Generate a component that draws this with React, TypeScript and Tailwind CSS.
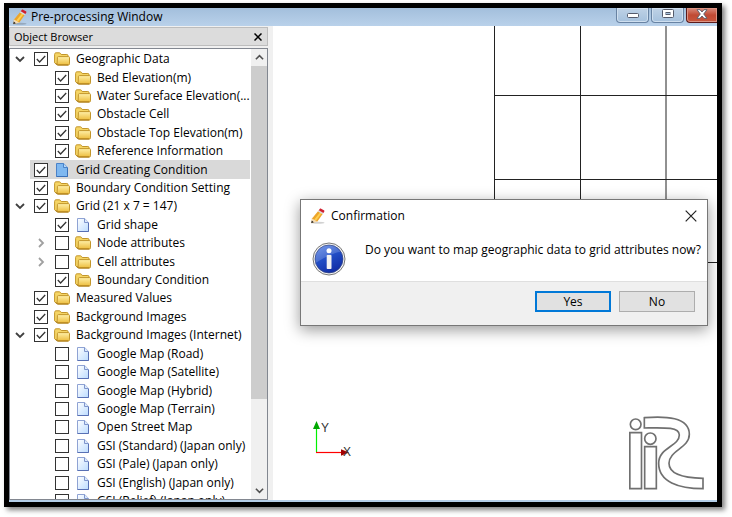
import { useState } from "react";

type Kind = "folder" | "page";

type Item = {
  label: string;
  level: 0 | 1;
  kind: Kind;
  checked: boolean;
  arrow?: "open" | "closed";
  selected?: boolean;
};

const items: Item[] = [
  { label: "Geographic Data", level: 0, kind: "folder", checked: true, arrow: "open" },
  { label: "Bed Elevation(m)", level: 1, kind: "folder", checked: true },
  { label: "Water Sureface Elevation(...", level: 1, kind: "folder", checked: true },
  { label: "Obstacle Cell", level: 1, kind: "folder", checked: true },
  { label: "Obstacle Top Elevation(m)", level: 1, kind: "folder", checked: true },
  { label: "Reference Information", level: 1, kind: "folder", checked: true },
  { label: "Grid Creating Condition", level: 0, kind: "page", checked: true, selected: true },
  { label: "Boundary Condition Setting", level: 0, kind: "folder", checked: true },
  { label: "Grid (21 x 7 = 147)", level: 0, kind: "folder", checked: true, arrow: "open" },
  { label: "Grid shape", level: 1, kind: "page", checked: true },
  { label: "Node attributes", level: 1, kind: "folder", checked: false, arrow: "closed" },
  { label: "Cell attributes", level: 1, kind: "folder", checked: false, arrow: "closed" },
  { label: "Boundary Condition", level: 1, kind: "folder", checked: true },
  { label: "Measured Values", level: 0, kind: "folder", checked: true },
  { label: "Background Images", level: 0, kind: "folder", checked: true },
  { label: "Background Images (Internet)", level: 0, kind: "folder", checked: true, arrow: "open" },
  { label: "Google Map (Road)", level: 1, kind: "page", checked: false },
  { label: "Google Map (Satellite)", level: 1, kind: "page", checked: false },
  { label: "Google Map (Hybrid)", level: 1, kind: "page", checked: false },
  { label: "Google Map (Terrain)", level: 1, kind: "page", checked: false },
  { label: "Open Street Map", level: 1, kind: "page", checked: false },
  { label: "GSI (Standard) (Japan only)", level: 1, kind: "page", checked: false },
  { label: "GSI (Pale) (Japan only)", level: 1, kind: "page", checked: false },
  { label: "GSI (English) (Japan only)", level: 1, kind: "page", checked: false },
  { label: "GSI (Relief) (Japan only)", level: 1, kind: "page", checked: false },
];

function PencilIcon() {
  return (
    <svg viewBox="0 0 16 16" className="size-4 shrink-0" aria-hidden="true">
      <ellipse cx="8" cy="14.8" rx="6.5" ry="1" fill="#000" opacity="0.18" />
      <path d="M2 10.4 8.600 2.600l4.600 2.600-5.800 8.200-5.900 1.600Z" fill="#eda52a" />
      <path d="M4.300 11.500 10.400 3.900l1.400.8-5.600 7.900Z" fill="#ffd050" />
      <path d="m2 10.400 5.400 3-5.900 1.600Z" fill="#f5dcb4" />
      <path d="m1.800 12.600 2 1.600-2.600 1.100Z" fill="#222" />
      <path d="m7.900 3.400.9-1.100 4.600 2.800-.8 1.100Z" fill="#d8dce2" />
      <path d="m8.800 2.300.9-1.300c.4-.5.900-.6 1.400-.3l2.800 1.600c.6.400.7 1 .3 1.500l-.8 1.300Z" fill="#d02030" />
    </svg>
  );
}

function FolderIcon() {
  return (
    <svg viewBox="0 0 16 16" className="size-4 shrink-0" aria-hidden="true">
      <defs>
        <linearGradient id="folderFace" x1="0" y1="0" x2="0" y2="1">
          <stop offset="0" stopColor="#fff0a8" />
          <stop offset="1" stopColor="#ecbc3c" />
        </linearGradient>
      </defs>
      <path d="M.6 11.8V3.4c0-.9.6-1.600 1.500-1.600h3.200c.7 0 1 .3 1.400.9l.5.8h5.600c.8 0 1.300.5 1.300 1.300v1L12.500 13H2Z" fill="#f5d565" stroke="#c2952a" />
      <path d="M3.400 6.600c0-.7.4-1 1-1h10.200c.6 0 .9.4.9 1v6.200c0 .7-.4 1.200-1.100 1.200H4.200c-.7 0-1.100-.4-1.100-1Z" fill="url(#folderFace)" stroke="#c2952a" />
      <path d="M2 12.500c.2.9.7 1.500 1.800 1.500h10.400" fill="none" stroke="#a87712" />
    </svg>
  );
}

function PageIcon({ selected }: { selected?: boolean }) {
  return (
    <svg viewBox="0 0 16 16" className="size-4 shrink-0" aria-hidden="true">
      <defs>
        <linearGradient id="pageFace" x1="0" y1="0" x2="1" y2="1">
          <stop offset="0" stopColor="#ffffff" />
          <stop offset="1" stopColor="#bcdcff" />
        </linearGradient>
      </defs>
      <path d="M2.500 1.500h7.200l3.800 4v9h-11Z" fill={selected ? "#7fb8f0" : "url(#pageFace)"} stroke={selected ? "#4a82c8" : "#8fa3d4"} />
      <path d="M9.500 1.500v4h4" fill={selected ? "#b5d8fa" : "#dbe9fb"} stroke={selected ? "#4a82c8" : "#7f95cc"} />
      <path d="M13.500 6v8.500h-11" fill="none" stroke={selected ? "#3a70b8" : "#5870b4"} />
    </svg>
  );
}

function Chevron({ dir, className }: { dir: "down" | "right" | "up"; className: string }) {
  const d = dir === "down" ? "M1 3l4 4 4-4" : dir === "up" ? "M1 7l4-4 4 4" : "M3 1l4 4-4 4";
  return (
    <svg viewBox="0 0 10 10" className={className} fill="none" stroke="currentColor" strokeWidth="1.8" aria-hidden="true">
      <path d={d} />
    </svg>
  );
}

function TreeRow({ item }: { item: Item }) {
  return (
    <li className={`flex min-h-0 flex-1 items-center ${item.level === 1 ? "pl-[21px]" : ""}`}>
      <span className="flex w-5 shrink-0 justify-center">
        {item.arrow && (
          <button type="button" aria-label={`Toggle ${item.label}`} className="flex size-4 items-center justify-center">
            {item.arrow === "open" ? (
              <Chevron dir="down" className="size-[10px] text-[#404040]" />
            ) : (
              <Chevron dir="right" className="size-[10px] text-[#a0a0a0]" />
            )}
          </button>
        )}
      </span>
      <label className={`mr-px flex h-full flex-1 items-center whitespace-nowrap pl-1 ${item.selected ? "bg-[#d9d9d9]" : ""}`}>
        <span className="mr-[6px] grid size-[14px] shrink-0">
          <input
            type="checkbox"
            defaultChecked={item.checked}
            className="peer col-start-1 row-start-1 size-[14px] appearance-none border border-[#333] bg-white"
          />
          <svg
            viewBox="0 0 14 14"
            className="pointer-events-none invisible col-start-1 row-start-1 size-[14px] peer-checked:visible"
            fill="none"
            stroke="#333"
            strokeWidth="1.3"
            aria-hidden="true"
          >
            <path d="m2.8 7 2.8 3 5.600-6" />
          </svg>
        </span>
        {item.kind === "folder" ? <FolderIcon /> : <PageIcon selected={item.selected} />}
        <span className="ml-[6px]">{item.label}</span>
      </label>
    </li>
  );
}

function ObjectBrowser() {
  return (
    <aside className="flex w-[259px] shrink-0 flex-col">
      <header className="mt-px flex h-[19px] shrink-0 items-center justify-between border border-[#bdbdbd] bg-[#dcdcdc] pr-1 pl-1 text-[11px]">
        <h2>Object Browser</h2>
        <button type="button" aria-label="Close Object Browser" className="flex size-[10px] items-center justify-center">
          <svg viewBox="0 0 8 8" className="size-2" stroke="#000" strokeWidth="1.500" aria-hidden="true">
            <path d="m.5.5 7 7m0-7-7 7" />
          </svg>
        </button>
      </header>
      <div className="mt-[2px] flex min-h-0 flex-1 border border-[#828790] bg-white">
        <div className="min-w-0 flex-1 overflow-hidden pt-px">
          <ul className="flex h-[460px] flex-col">
            {items.map((item) => (
              <TreeRow key={item.label} item={item} />
            ))}
          </ul>
        </div>
        <div className="flex w-4 shrink-0 flex-col bg-[#f0f0f0]">
          <button type="button" aria-label="Scroll up" className="flex h-[17px] items-center justify-center">
            <Chevron dir="up" className="size-[9px] text-[#505050]" />
          </button>
          <div className="flex-1">
            <div className="h-4/5 bg-[#cdcdcd]" />
          </div>
          <button type="button" aria-label="Scroll down" className="flex h-[17px] items-center justify-center">
            <Chevron dir="down" className="size-[9px] text-[#505050]" />
          </button>
        </div>
      </div>
    </aside>
  );
}

function GridLines() {
  return (
    <svg viewBox="0 0 223 238" className="absolute top-0 right-0 h-[238px] w-[223px]" fill="none" stroke="#222" aria-hidden="true">
      <path d="M.5 0v237M86.500 0v237M172 0v237M0 69.500H223M0 153.500H223M0 236.500H223" />
    </svg>
  );
}

function Axes() {
  return (
    <svg viewBox="0 0 40 40" className="absolute bottom-[42px] left-[40px] size-10" aria-label="X and Y axes">
      <path d="M3.500 34V9" stroke="#00f000" strokeWidth="1.200" />
      <path d="M3.500 3 7 11H0Z" fill="#00a800" />
      <path d="M3 34.500H28" stroke="#f00" strokeWidth="1.200" />
      <path d="m36 34.500-8-3.200v6.400Z" fill="#a00000" />
      <text x="8" y="14" fontSize="12" fill="#333" className="font-['Liberation_Sans',sans-serif]">Y</text>
      <text x="30" y="38" fontSize="12" fill="#333" className="font-['Liberation_Sans',sans-serif]">X</text>
    </svg>
  );
}

function Logo() {
  return (
    <svg
      viewBox="87 80 225 222"
      className="absolute right-[13px] bottom-[10px] h-[74px] w-[75px]"
      fill="none"
      stroke="#707070"
      strokeWidth="5"
      aria-label="iRIC"
    >
      <circle cx="107" cy="105" r="16" />
      <path d="M89.500 130h35v168h-35Z" />
      <circle cx="151" cy="148" r="17" />
      <path d="M134 172h35v126h-35Z" />
      <path d="M133 85C195 80 268 82 268 135C268 177 207 183 207 222C207 254 247 266 309 267V298C236 298 176 278 176 222C176 174 238 171 238 137C238 112 190 115 133 116Z" />
    </svg>
  );
}

function InfoIcon() {
  return (
    <svg viewBox="0 0 34 34" className="size-[34px] shrink-0" aria-hidden="true">
      <defs>
        <linearGradient id="infoBall" x1="0" y1="0" x2="0.500" y2="1">
          <stop offset="0" stopColor="#5b86e8" />
          <stop offset="0.500" stopColor="#2350c8" />
          <stop offset="1" stopColor="#1230a8" />
        </linearGradient>
      </defs>
      <circle cx="17" cy="17" r="16" fill="#f4f4f4" stroke="#777" />
      <circle cx="17" cy="17" r="14" fill="url(#infoBall)" stroke="#33447c" strokeWidth="0.700" />
      <path d="M3.500 17C4 9 9 3.500 17 3.500c5 0 9 2.500 11.500 6.500C22 10 12 16 3.500 21Z" fill="#fff" opacity="0.180" />
      <circle cx="17" cy="8.700" r="2.500" fill="#fff" />
      <rect x="14.700" y="13" width="4.800" height="14" rx="0.800" fill="#f2f2f2" />
    </svg>
  );
}

function Confirmation({ onClose }: { onClose: () => void }) {
  return (
    <section
      role="dialog"
      aria-labelledby="confirm-title"
      className="absolute top-[173px] right-[9px] flex w-[408px] flex-col border border-[#777] bg-white shadow-[0_4px_14px_rgba(0,0,0,0.4)]"
    >
      <header className="flex h-[31px] items-center pr-[10px] pl-[9px]">
        <PencilIcon />
        <h2 id="confirm-title" className="ml-[5px] flex-1">Confirmation</h2>
        <button type="button" aria-label="Close" onClick={onClose} className="flex size-3 items-center justify-center">
          <svg viewBox="0 0 12 12" className="size-3" stroke="#222" strokeWidth="1.200" aria-hidden="true">
            <path d="m.7.7 10.600 10.600m0-10.600L.7 11.300" />
          </svg>
        </button>
      </header>
      <div className="flex h-[50px] items-start pt-[11px] pl-[11px]">
        <InfoIcon />
        <p className="ml-[19px] whitespace-nowrap">Do you want to map geographic data to grid attributes now?</p>
      </div>
      <footer className="flex h-[44px] items-start justify-end gap-2 border-t border-[#dfdfdf] bg-[#f0f0f0] pt-[9px] pr-3">
        <button type="button" onClick={onClose} className="flex h-[21px] w-[76px] items-center justify-center border-2 border-[#0078d7] bg-[#e1e1e1]">
          Yes
        </button>
        <button type="button" onClick={onClose} className="flex h-[21px] w-[76px] items-center justify-center border border-[#adadad] bg-[#e1e1e1]">
          No
        </button>
      </footer>
    </section>
  );
}

function TitleBar() {
  return (
    <header className="flex h-[18px] shrink-0 items-center bg-linear-to-b from-[#a3bfdc] to-[#b9d1ea] pl-[3px]">
      <PencilIcon />
      <h1 className="ml-[3px] flex-1">Pre-processing Window</h1>
      <div className="flex gap-[2px] self-start">
        <button type="button" aria-label="Minimize" className="flex h-[15px] w-[33px] items-center justify-center rounded-b-sm border border-t-0 border-[#6883a3] bg-linear-to-b from-[#bfd2e6] to-[#a5c1dd] inset-shadow-[0_0_0_1px_#cfdfef]">
          <svg viewBox="0 0 12 5" className="mt-px h-[5px] w-3" aria-hidden="true">
            <rect x=".5" y=".5" width="11" height="4" rx="1" fill="#fff" stroke="#555b6b" />
          </svg>
        </button>
        <button type="button" aria-label="Maximize" className="flex h-[15px] w-[33px] items-center justify-center rounded-b-sm border border-t-0 border-[#6883a3] bg-linear-to-b from-[#bfd2e6] to-[#a5c1dd] pb-[3px] inset-shadow-[0_0_0_1px_#cfdfef]">
          <svg viewBox="0 0 12 10" className="h-[10px] w-3" aria-hidden="true">
            <rect x=".5" y=".5" width="11" height="8" rx="1" fill="#fff" stroke="#555b6b" />
            <rect x="4" y="3.500" width="4" height="2" fill="#a9c3de" stroke="#555b6b" />
          </svg>
        </button>
        <button type="button" aria-label="Close window" className="flex h-[15px] w-[31px] items-center justify-center rounded-bl-sm border border-t-0 border-r-0 border-[#5c1a1a] bg-linear-to-b from-[#d98b7c] via-[#c04a34] to-[#c8563c] pb-[3px] inset-shadow-[0_0_0_1px_#dc9484]">
          <svg viewBox="0 0 12 10" className="h-[10px] w-3" aria-hidden="true">
            <path d="M1 .7h3L6 3 8 .7h3L7.700 5 11 9.300H8L6 7 4 9.300H1L4.300 5Z" fill="#fff" stroke="#555b6b" strokeWidth="0.900" />
          </svg>
        </button>
      </div>
    </header>
  );
}

export default function App() {
  const [asking, setAsking] = useState(true);
  return (
    <div className="flex h-screen min-h-[400px] bg-white pt-[3px] pr-[10px] pb-[10px] pl-1 font-['Open_Sans',sans-serif] text-[12px] leading-4 text-black">
      <div className="flex min-w-0 flex-1 flex-col border-[5px] border-black bg-[#b5cfe9] pb-[2px] shadow-[3px_3px_5px_rgba(0,0,0,0.5)]">
        <TitleBar />
        <div className="flex min-h-0 flex-1 bg-[#f0f0f0]">
          <ObjectBrowser />
          <main className="relative ml-[5px] min-w-0 flex-1 overflow-hidden bg-white">
            <GridLines />
            <Axes />
            <Logo />
            {asking && <Confirmation onClose={() => setAsking(false)} />}
          </main>
        </div>
      </div>
    </div>
  );
}
